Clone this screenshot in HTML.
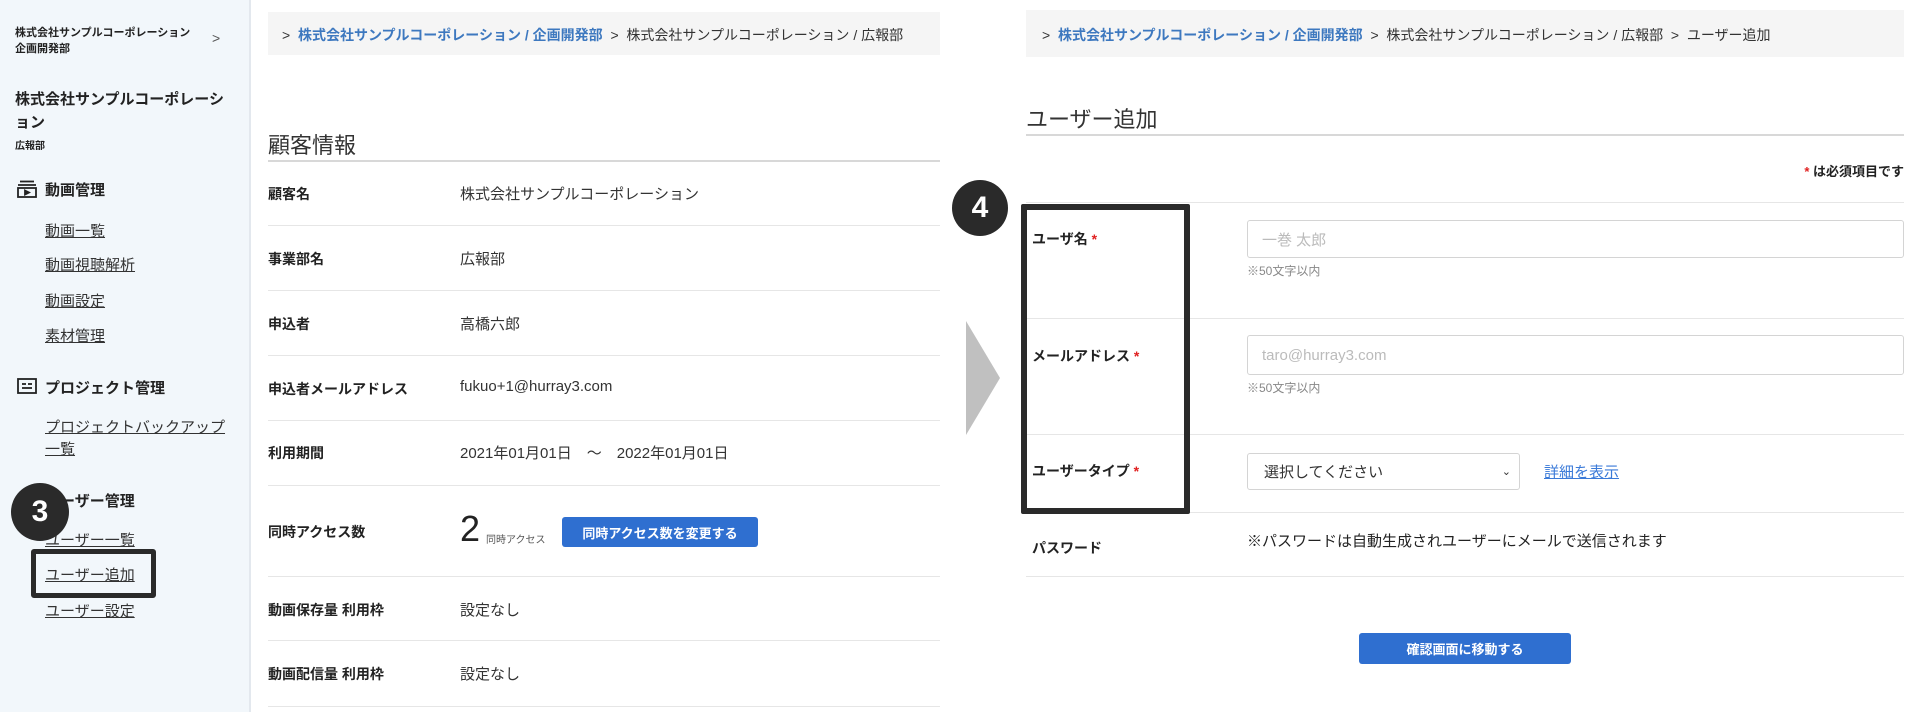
<!DOCTYPE html>
<html><head><meta charset="utf-8">
<style>
*{margin:0;padding:0;box-sizing:border-box}
body{width:1920px;height:712px;position:relative;background:#fff;font-family:"Liberation Sans","Noto Sans CJK JP",sans-serif;color:#222;overflow:hidden}
.a{position:absolute;white-space:nowrap}
.sb{position:absolute;left:0;top:0;width:251px;height:712px;background:#f2f7fb;border-right:2px solid #e3e8ee}
.lk{text-decoration:underline;font-size:15px;color:#333}
.b{font-weight:bold}
.bc{position:absolute;background:#f5f5f5;font-size:14px;color:#333}
.bc .l{color:#3d78bf;font-weight:bold}
.sep{position:absolute;height:1px;background:#e6e6e6}
.lab{font-size:14px;font-weight:bold;color:#222}
.val{font-size:15px;color:#333}
.inp{position:absolute;border:1.5px solid #d4d4d4;border-radius:3px;background:#fff;font-size:15px;color:#bbb;padding-left:14px;display:flex;align-items:center}
.note{font-size:12px;color:#888}
.red{color:#e02020}
.circ{position:absolute;border-radius:50%;background:#2a2a2a;color:#fff;font-weight:bold;font-size:30px;display:flex;align-items:center;justify-content:center}
.btn{position:absolute;background:#2f6fd0;border-radius:3px;color:#fff;font-size:13px;font-weight:bold;display:flex;align-items:center;justify-content:center}
</style></head><body>
<div class="sb"></div>
<div class="a b" style="left:15px;top:24px;font-size:11px">株式会社サンプルコーポレーション</div>
<div class="a b" style="left:15px;top:40px;font-size:11px">企画開発部</div>
<div class="a" style="left:212px;top:30px;font-size:14px;color:#555">&gt;</div>
<div class="a b" style="left:15px;top:88px;font-size:15px">株式会社サンプルコーポレーシ</div>
<div class="a b" style="left:15px;top:111px;font-size:15px">ョン</div>
<div class="a b" style="left:15px;top:137px;font-size:10px">広報部</div>
<svg class="a" style="left:17px;top:180px" width="20" height="18" viewBox="0 0 20 18" fill="none" stroke="#222" stroke-width="1.8"><line x1="3" y1="1.5" x2="17" y2="1.5"/><line x1="1" y1="5" x2="19" y2="5"/><rect x="1" y="8" width="18" height="9"/><path d="M8 10.5 L12 12.5 L8 14.5Z" fill="#222"/></svg>
<div class="a b" style="left:45px;top:179px;font-size:15px">動画管理</div>
<div class="a lk" style="left:45px;top:220px">動画一覧</div>
<div class="a lk" style="left:45px;top:254px">動画視聴解析</div>
<div class="a lk" style="left:45px;top:290px">動画設定</div>
<div class="a lk" style="left:45px;top:325px">素材管理</div>
<svg class="a" style="left:17px;top:378px" width="20" height="16" viewBox="0 0 20 16" fill="none" stroke="#222" stroke-width="1.8"><rect x="1" y="1" width="18" height="14"/><line x1="5" y1="6" x2="9" y2="6"/><line x1="11" y1="6" x2="15" y2="6"/><line x1="5" y1="10" x2="15" y2="10"/></svg>
<div class="a b" style="left:45px;top:377px;font-size:15px">プロジェクト管理</div>
<div class="a lk" style="left:45px;top:416px">プロジェクトバックアップ</div>
<div class="a lk" style="left:45px;top:438px">一覧</div>
<div class="a b" style="left:45px;top:490px;font-size:15px">ユーザー管理</div>
<div class="a lk" style="left:45px;top:529px">ユーザー一覧</div>
<div class="a lk" style="left:45px;top:564px">ユーザー追加</div>
<div class="a lk" style="left:45px;top:600px">ユーザー設定</div>
<div class="a" style="left:31px;top:549px;width:125px;height:49px;border:5px solid #2a2a2a;border-radius:3px"></div>
<div class="circ" style="left:11px;top:483px;width:58px;height:58px">3</div>

<div class="bc" style="left:268px;top:12px;width:672px;height:43px;padding:13px 0 0 14px"><span>&gt;&nbsp;&nbsp;</span><span class="l">株式会社サンプルコーポレーション / 企画開発部</span>&nbsp;&nbsp;&gt;&nbsp;&nbsp;株式会社サンプルコーポレーション / 広報部</div>
<div class="a" style="left:268px;top:128px;font-size:22px;color:#333">顧客情報</div>
<div class="sep" style="left:268px;top:160px;width:672px;background:#d8d8d8;height:2px"></div>
<div class="a lab" style="left:268px;top:184px">顧客名</div><div class="a val" style="left:460px;top:183px">株式会社サンプルコーポレーション</div>
<div class="sep" style="left:268px;top:225px;width:672px"></div>
<div class="a lab" style="left:268px;top:249px">事業部名</div><div class="a val" style="left:460px;top:248px">広報部</div>
<div class="sep" style="left:268px;top:290px;width:672px"></div>
<div class="a lab" style="left:268px;top:314px">申込者</div><div class="a val" style="left:460px;top:313px">高橋六郎</div>
<div class="sep" style="left:268px;top:355px;width:672px"></div>
<div class="a lab" style="left:268px;top:379px">申込者メールアドレス</div><div class="a val" style="left:460px;top:378px">fukuo+1@hurray3.com</div>
<div class="sep" style="left:268px;top:420px;width:672px"></div>
<div class="a lab" style="left:268px;top:443px">利用期間</div><div class="a val" style="left:460px;top:442px">2021年01月01日　～　2022年01月01日</div>
<div class="sep" style="left:268px;top:485px;width:672px"></div>
<div class="a lab" style="left:268px;top:522px">同時アクセス数</div>
<div class="a" style="left:460px;top:508px;font-size:36px;color:#222">2</div>
<div class="a" style="left:486px;top:531px;font-size:10px;color:#555">同時アクセス</div>
<div class="btn" style="left:562px;top:517px;width:196px;height:30px">同時アクセス数を変更する</div>
<div class="sep" style="left:268px;top:576px;width:672px"></div>
<div class="a lab" style="left:268px;top:600px">動画保存量 利用枠</div><div class="a val" style="left:460px;top:599px">設定なし</div>
<div class="sep" style="left:268px;top:640px;width:672px"></div>
<div class="a lab" style="left:268px;top:664px">動画配信量 利用枠</div><div class="a val" style="left:460px;top:663px">設定なし</div>
<div class="sep" style="left:268px;top:706px;width:672px"></div>

<svg class="a" style="left:966px;top:321px" width="34" height="114"><polygon points="0,0 34,57 0,114" fill="#c0c0c0"/></svg>

<div class="bc" style="left:1026px;top:10px;width:878px;height:47px;padding:15px 0 0 16px"><span>&gt;&nbsp;&nbsp;</span><span class="l">株式会社サンプルコーポレーション / 企画開発部</span>&nbsp;&nbsp;&gt;&nbsp;&nbsp;株式会社サンプルコーポレーション / 広報部&nbsp;&nbsp;&gt;&nbsp;&nbsp;ユーザー追加</div>
<div class="a" style="left:1026px;top:102px;font-size:22px;color:#333">ユーザー追加</div>
<div class="sep" style="left:1026px;top:134px;width:878px;background:#d8d8d8;height:2px"></div>
<div class="a b" style="right:16px;top:161px;font-size:13px"><span class="red">*</span> は必須項目です</div>
<div class="sep" style="left:1026px;top:202px;width:878px"></div>
<div class="a lab" style="left:1032px;top:229px">ユーザ名 <span class="red">*</span></div>
<div class="inp" style="left:1247px;top:220px;width:657px;height:38px">一巻 太郎</div>
<div class="a note" style="left:1247px;top:262px">※50文字以内</div>
<div class="sep" style="left:1026px;top:318px;width:878px"></div>
<div class="a lab" style="left:1032px;top:346px">メールアドレス <span class="red">*</span></div>
<div class="inp" style="left:1247px;top:335px;width:657px;height:40px">taro@hurray3.com</div>
<div class="a note" style="left:1247px;top:379px">※50文字以内</div>
<div class="sep" style="left:1026px;top:434px;width:878px"></div>
<div class="a lab" style="left:1032px;top:461px">ユーザータイプ <span class="red">*</span></div>
<div class="inp" style="left:1247px;top:453px;width:273px;height:37px;color:#333;font-size:15px;padding-left:16px">選択してください<span style="position:absolute;right:8px;font-size:11px">&#8964;</span></div>
<div class="a" style="left:1544px;top:461px;font-size:15px;color:#3a7ad8;text-decoration:underline">詳細を表示</div>
<div class="sep" style="left:1026px;top:512px;width:878px"></div>
<div class="a lab" style="left:1032px;top:538px">パスワード</div>
<div class="a" style="left:1247px;top:530px;font-size:15px;color:#222">※パスワードは自動生成されユーザーにメールで送信されます</div>
<div class="sep" style="left:1026px;top:576px;width:878px"></div>
<div class="btn" style="left:1359px;top:633px;width:212px;height:31px">確認画面に移動する</div>
<div class="a" style="left:1021px;top:204px;width:169px;height:310px;border:6px solid #2a2a2a;border-radius:2px"></div>
<div class="circ" style="left:952px;top:180px;width:56px;height:56px">4</div>
</body></html>
